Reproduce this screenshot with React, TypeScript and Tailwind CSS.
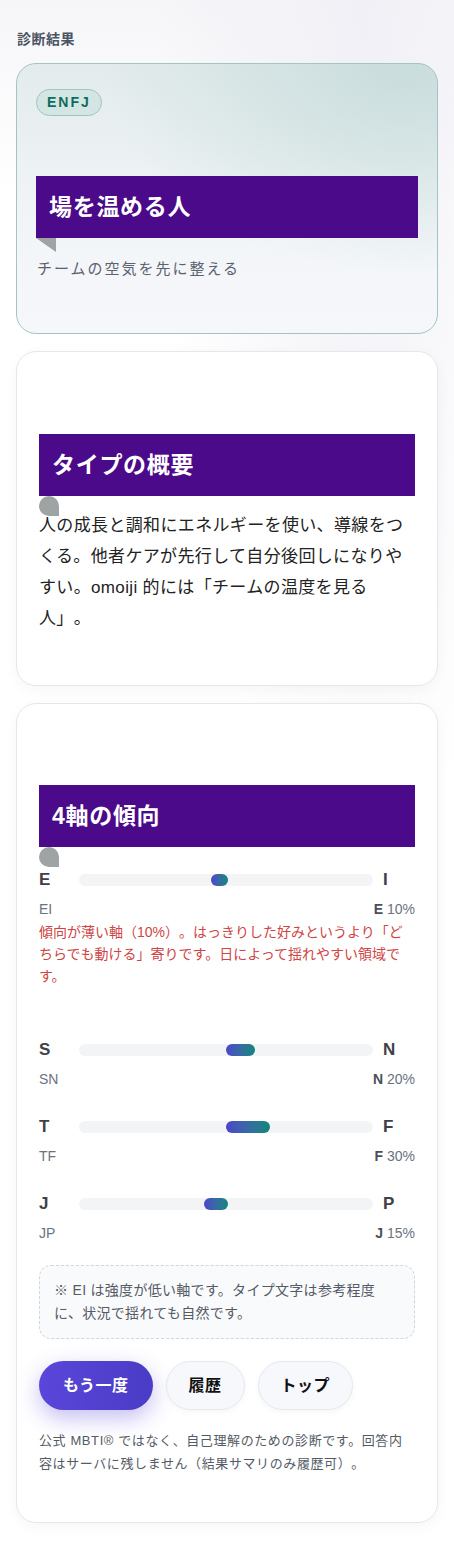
import type { ReactNode } from "react";

const font = "font-['Liberation_Sans','Noto_Sans_CJK_JP',sans-serif]";

type Axis = {
	left: string;
	right: string;
	code: string;
	winner: string;
	pct: number;
	side: "left" | "right";
	note?: string;
};

const axes: Axis[] = [
	{
		left: "E",
		right: "I",
		code: "EI",
		winner: "E",
		pct: 10,
		side: "left",
		note: "傾向が薄い軸（10%）。はっきりした好みというより「どちらでも動ける」寄りです。日によって揺れやすい領域です。",
	},
	{ left: "S", right: "N", code: "SN", winner: "N", pct: 20, side: "right" },
	{ left: "T", right: "F", code: "TF", winner: "F", pct: 30, side: "right" },
	{ left: "J", right: "P", code: "JP", winner: "J", pct: 15, side: "left" },
];

function Banner({ children, fold }: { children: ReactNode; fold: "tri" | "drop" }) {
	return (
		<div className="relative">
			<h2 className="flex h-[62px] items-center bg-[#4a0a89] pl-[13px] font-bold text-[23px] text-white tracking-[0.7px]">
				{children}
			</h2>
			{fold === "tri" ? (
				<div className="absolute top-full left-0 h-[14px] w-[20px] bg-[#9ea3a3] [clip-path:polygon(0_0,100%_0,100%_100%)]" />
			) : (
				<div className="absolute top-full left-0 h-[20px] w-[20px] rounded-[50%_50%_0_50%] bg-[#9ea3a3]" />
			)}
		</div>
	);
}

function AxisRow({ axis }: { axis: Axis }) {
	const half = axis.pct / 2;
	const fillStyle =
		axis.side === "right"
			? { left: "50%", width: `${half}%` }
			: { right: "calc(50% - 2px)", width: `calc(${half}% + 2px)` };
	return (
		<div>
			<div className="grid h-6 grid-cols-[30px_1fr_32px] items-center gap-[10px]">
				<span className="font-bold text-[17px] text-[#3f4147]">{axis.left}</span>
				<div className="relative h-3 rounded-full bg-[#f3f4f6]">
					<div
						className="absolute top-0 h-3 rounded-full bg-gradient-to-r from-[#4c43c9] to-[#10857a]"
						style={fillStyle}
					/>
				</div>
				<span className="font-bold text-[17px] text-[#3f4147]">{axis.right}</span>
			</div>
			<div className="mt-2 flex h-5 items-center justify-between text-[14px] text-[#6b7280]">
				<span>{axis.code}</span>
				<span>
					<b className="text-[#4b5058]">{axis.winner}</b> {axis.pct}%
				</span>
			</div>
			{axis.note && (
				<p className="mt-[2px] mb-[25px] text-[14px] text-[#cf4545] leading-[22px]">
					{axis.note}
				</p>
			)}
		</div>
	);
}

export default function App() {
	return (
		<main
			className={`${font} min-h-[1567px] bg-[radial-gradient(ellipse_at_80%_0%,#f0f0f6_0%,transparent_40%),linear-gradient(180deg,#f6f6f9_0%,#ffffff_200px)] px-4 pt-[30px] pb-[45px] [text-spacing-trim:space-all]`}
		>
			<p className="pl-px font-bold text-[#4b5563] text-[14px] tracking-[0.5px] leading-[18px]">
				診断結果
			</p>

			<section className="mt-[15px] rounded-[20px] border border-[#a3c4c4] bg-[radial-gradient(ellipse_at_92%_0%,#c9dddc_0%,transparent_55%),linear-gradient(180deg,#e3ebec_0%,#f2f5f7_60%,#f6f7fb_100%)] px-[19px] pt-[25px] pb-[53px]">
				<span className="inline-flex h-[27px] items-center rounded-full border border-[#9ec5bf] bg-[#d3e6e3] px-[10px] font-bold text-[#0f6b5e] text-[14px] tracking-[2px]">
					ENFJ
				</span>
				<div className="mt-[60px]">
					<Banner fold="tri">場を温める人</Banner>
				</div>
				<p className="mt-5 pl-px text-[#5b6270] text-[15px] tracking-[2px] leading-[22px]">
					チームの空気を先に整える
				</p>
			</section>

			<section className="mt-[17px] rounded-[20px] border border-[#e5e7eb] bg-white px-[22px] pt-[82px] pb-[51px] shadow-[0_4px_14px_rgba(15,23,42,0.04)]">
				<Banner fold="drop">タイプの概要</Banner>
				<p className="mt-[14px] text-[#222] text-[17px] tracking-[0.35px] leading-[31px]">
					人の成長と調和にエネルギーを使い、導線をつくる。他者ケアが先行して自分後回しになりやすい。omoiji
					的には「チームの温度を見る人」。
				</p>
			</section>

			<section className="mt-[17px] rounded-[20px] border border-[#e5e7eb] bg-white px-[22px] pt-[81px] pb-[47px] shadow-[0_4px_14px_rgba(15,23,42,0.04)]">
				<Banner fold="drop">4軸の傾向</Banner>
				<div className="mt-5 flex flex-col gap-[25px]">
					{axes.map((a) => (
						<AxisRow key={a.code} axis={a} />
					))}
				</div>

				<div className="mt-[22px] rounded-[12px] border border-[#d4d6db] border-dashed bg-[#f9fafb] px-[14px] py-[13px] text-[#555b66] text-[14px] tracking-[0.3px] leading-[23px]">
					※ EI は強度が低い軸です。タイプ文字は参考程度に、状況で揺れても自然です。
				</div>

				<div className="mt-[22px] flex gap-[13px]">
					<button
						type="button"
						className="h-[49px] rounded-full bg-gradient-to-r from-[#5a46da] to-[#4a3cc6] px-6 font-bold text-[16px] text-white tracking-[0.5px] shadow-[0_8px_22px_rgba(90,70,218,0.35)]"
					>
						もう一度
					</button>
					<button
						type="button"
						className="h-[49px] rounded-full border border-[#e6e8ec] bg-[#f7f8fb] px-[22px] font-bold text-[#111] text-[16px] tracking-[0.5px] shadow-[0_2px_6px_rgba(15,23,42,0.04)]"
					>
						履歴
					</button>
					<button
						type="button"
						className="h-[49px] rounded-full border border-[#e6e8ec] bg-[#f7f8fb] px-[22px] font-bold text-[#111] text-[16px] tracking-[0.5px] shadow-[0_2px_6px_rgba(15,23,42,0.04)]"
					>
						トップ
					</button>
				</div>

				<p className="mt-[19px] text-[#555b66] text-[13px] tracking-[0.6px] leading-[23px]">
					公式 MBTI® ではなく、自己理解のための診断です。回答内容はサーバに残しません（結果サマリのみ履歴可）。
				</p>
			</section>
		</main>
	);
}
